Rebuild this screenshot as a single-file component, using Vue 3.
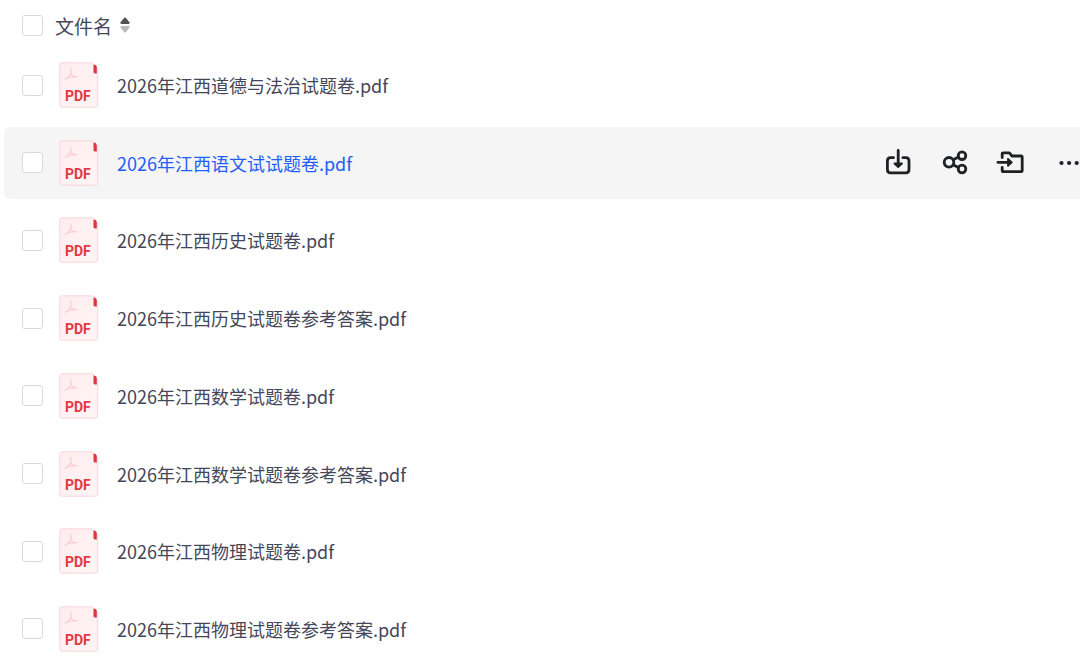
<script setup>
import { ref } from 'vue'

const files = ref([
  '2026年江西道德与法治试题卷.pdf',
  '2026年江西语文试试题卷.pdf',
  '2026年江西历史试题卷.pdf',
  '2026年江西历史试题卷参考答案.pdf',
  '2026年江西数学试题卷.pdf',
  '2026年江西数学试题卷参考答案.pdf',
  '2026年江西物理试题卷.pdf',
  '2026年江西物理试题卷参考答案.pdf',
].map((name) => ({ name, checked: false })))
const active = ref(1)
</script>

<template>
  <main class="page">
    <header class="head">
      <input id="all" class="check" type="checkbox" aria-label="全选" />
      <button class="sort" type="button">
        <span>文件名</span>
        <svg class="arrows" width="10" height="16" viewBox="0 0 10 16" aria-hidden="true">
          <path d="M.6 5.2 4 1.1Q5 0 6 1.1L9.4 5.2Q10 7 8.6 7H1.4Q0 7 .6 5.2Z" fill="#505258" />
          <path d="M.6 10.8 4 14.9Q5 16 6 14.9L9.4 10.8Q10 9 8.6 9H1.4Q0 9 .6 10.8Z" fill="#b9babd" />
        </svg>
      </button>
    </header>
    <ul class="list">
      <li v-for="(file, i) in files" :key="file.name" class="row" :class="{ active: i === active }">
        <input v-model="file.checked" class="check" type="checkbox" :aria-label="file.name" />
        <span class="icon">
          <svg width="40" height="46" viewBox="0 0 40 46" aria-hidden="true">
            <defs>
              <linearGradient :id="`sheet-${i}`" x1="0" y1="0" x2="1" y2="1">
                <stop offset="0" stop-color="#ffecee" />
                <stop offset="1" stop-color="#fff5f5" />
              </linearGradient>
            </defs>
            <path d="M3 .8H33.5L38.7 6.5V43Q38.7 45.2 36.5 45.2H3Q.8 45.2 .8 43V3Q.8 .8 3 .8Z" :fill="`url(#sheet-${i})`" stroke="#f9d6d9" />
            <path d="M34.5 2.5Q37.8 2.5 37.8 5.5V11.5H36.3Q34.5 11.5 34.5 10Z" fill="#dc3840" />
            <path d="M11.5 6.5C13 9 11.5 14 6.5 17.5M12 11.5C13 14.5 15 15.2 18 14.6M7 16.5C10 14.6 13 14.2 18 14.8" fill="none" stroke="#f8cfd3" stroke-width="1.2" stroke-linecap="round" />
          </svg>
          <span class="kind">PDF</span>
        </span>
        <a class="name" href="#">{{ file.name }}</a>
        <div v-if="i === active" class="actions">
          <button type="button" aria-label="下载">
            <svg width="28" height="28" viewBox="0 0 28 28" aria-hidden="true">
              <path d="M9.5 8.7H6.5Q3.4 8.7 3.4 12V20.5Q3.4 23.8 6.5 23.8H21.9Q25 23.8 25 20.5V12Q25 8.7 21.9 8.7H18.9M14.2 1.4V16" />
              <path d="M10.4 14.5H18L14.2 18Z" fill="#202124" stroke-width="1.8" />
            </svg>
          </button>
          <button type="button" aria-label="分享">
            <svg width="28" height="28" viewBox="0 0 28 28" aria-hidden="true">
              <circle cx="8" cy="13.3" r="4.8" />
              <circle cx="21" cy="6.7" r="3.8" />
              <circle cx="21" cy="20" r="3.8" />
              <path d="M12.2 10.8 17.4 8M12.2 15.8 17.4 18.6" />
            </svg>
          </button>
          <button type="button" aria-label="移动到">
            <svg class="move" width="28" height="28" viewBox="1 0 28 28" aria-hidden="true">
              <path d="M5.2 8.5V5Q5.2 3.8 6.4 3.8H12.4L15 7H24Q25.2 7 25.2 8.2V21.3Q25.2 22.7 24 22.7H6.4Q5.2 22.7 5.2 21.5V18.5M.9 13.3H12.5" />
              <path d="M11 9.8V16.8L14.8 13.3Z" fill="#202124" stroke-width="1.8" />
            </svg>
          </button>
          <button type="button" aria-label="更多">
            <svg width="28" height="28" viewBox="0 0 28 28" aria-hidden="true">
              <g fill="#202124" stroke="none">
                <circle cx="6.5" cy="14" r="2.1" />
                <circle cx="14.1" cy="14" r="2.1" />
                <circle cx="21.7" cy="14" r="2.1" />
              </g>
            </svg>
          </button>
        </div>
      </li>
    </ul>
  </main>
</template>

<style>
body {
  margin: 0;
  background: #fff;
}
</style>

<style scoped>
.page {
  box-sizing: border-box;
  min-height: 100vh;
  padding-left: 4px;
  overflow: hidden;
  font-family: "Noto Sans CJK SC", sans-serif;
  color: #454759;
}
.head {
  display: flex;
  align-items: center;
  gap: 12px;
  height: 49px;
  padding: 2px 0 0 18px;
  box-sizing: border-box;
}
.check {
  appearance: none;
  box-sizing: border-box;
  flex: none;
  width: 21px;
  height: 21px;
  margin: 0;
  border: 1px solid #d9dadd;
  border-radius: 3px;
  background: #fff;
}
.check:checked {
  background: #2b64f6;
}
button {
  padding: 0;
  border: 0;
  background: none;
  font: inherit;
  color: inherit;
  cursor: pointer;
}
.sort {
  display: flex;
  align-items: center;
  gap: 8px;
  font-size: 19px;
  line-height: 28px;
}
.arrows {
  margin-bottom: 2px;
}
.list {
  display: flex;
  flex-direction: column;
  justify-content: space-between;
  min-height: calc(100vh - 47px);
  margin: 0;
  padding: 0;
  list-style: none;
}
.row {
  display: flex;
  align-items: center;
  box-sizing: border-box;
  height: 72px;
  padding-left: 18px;
  border-radius: 6px 0 0 6px;
}
.active {
  background: #f5f5f5;
}
.icon {
  position: relative;
  flex: none;
  width: 40px;
  height: 46px;
  margin: 0 18px 0 16px;
}
.icon svg,
.actions svg {
  display: block;
}
.move {
  overflow: visible;
}
.kind {
  position: absolute;
  left: 6px;
  bottom: 3px;
  font: bold 14px/18px "Roboto", sans-serif;
  color: #e23a41;
}
.name {
  flex: 1;
  font-size: 18px;
  line-height: 28px;
  color: inherit;
  text-decoration: none;
  white-space: nowrap;
}
.active .name {
  color: #245ff5;
}
.actions {
  display: flex;
  flex: none;
  gap: 29px;
  margin-right: -3px;
}
.actions svg {
  fill: none;
  stroke: #202124;
  stroke-width: 2.8;
  stroke-linecap: round;
  stroke-linejoin: round;
}
</style>
